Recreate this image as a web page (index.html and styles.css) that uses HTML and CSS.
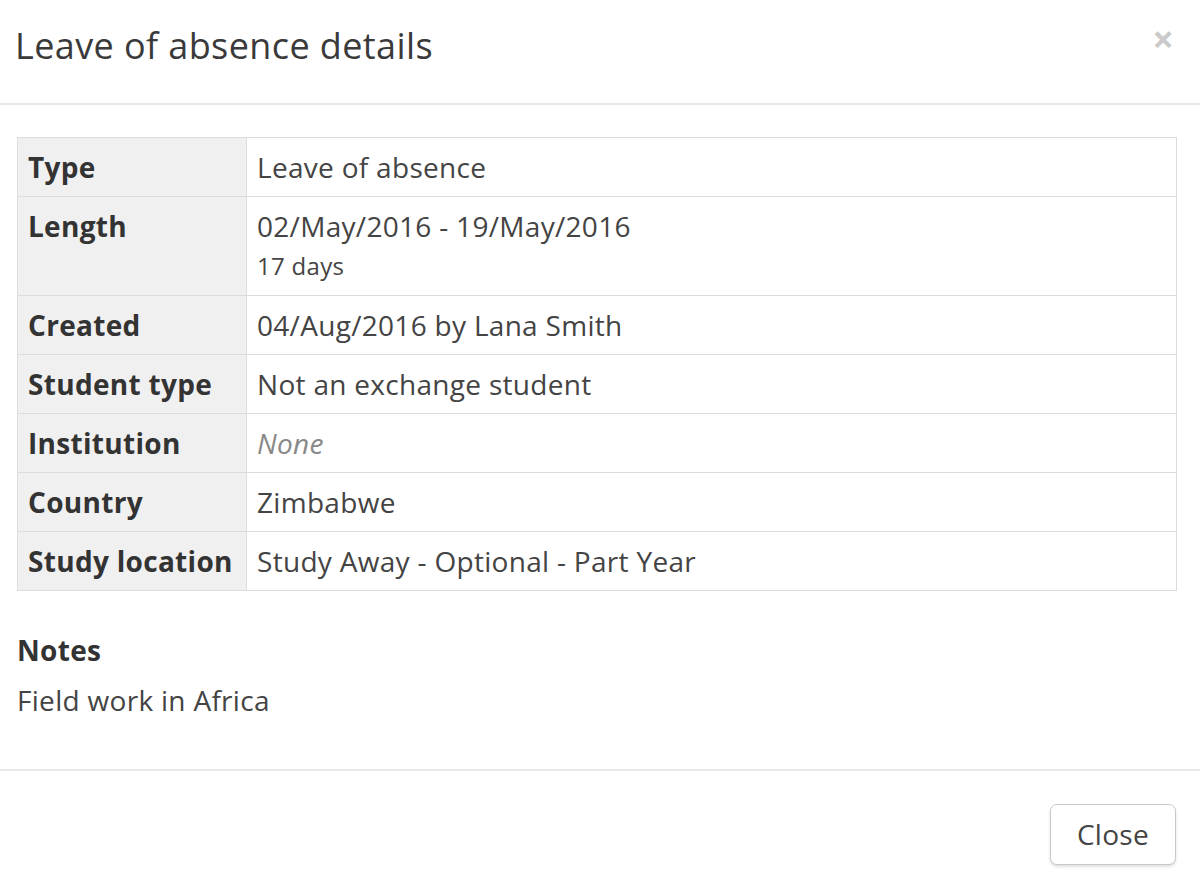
FILE: index.html
```html
<!DOCTYPE html>
<html>
<head>
<meta charset="utf-8">
<link rel="stylesheet" href="styles.css">
</head>
<body>
<div class="modal">
  <div class="modal-header">
    <h4 class="modal-title">Leave of absence details</h4>
    <button class="close" type="button">&times;</button>
  </div>
  <div class="modal-body">
    <table class="details">
      <tr><th>Type</th><td>Leave of absence</td></tr>
      <tr><th>Length</th><td>02/May/2016 - 19/May/2016<small>17 days</small></td></tr>
      <tr><th>Created</th><td>04/Aug/2016 by Lana Smith</td></tr>
      <tr><th>Student type</th><td>Not an exchange student</td></tr>
      <tr><th>Institution</th><td><em class="muted">None</em></td></tr>
      <tr><th>Country</th><td>Zimbabwe</td></tr>
      <tr><th>Study location</th><td>Study Away - Optional - Part Year</td></tr>
    </table>
    <h5 class="notes-title">Notes</h5>
    <p class="notes">Field work in Africa</p>
  </div>
  <div class="modal-footer">
    <button class="btn" type="button">Close</button>
  </div>
</div>
</body>
</html>
```
FILE: styles.css
```css
html, body {
  margin: 0;
  padding: 0;
  background: #fff;
}
body {
  font-family: "Open Sans", "Liberation Sans", sans-serif;
  font-size: 28px;
  line-height: 40px;
  letter-spacing: 0.3px;
  color: #333;
}
.modal {
  width: 1200px;
}
.modal-header {
  display: flex;
  justify-content: space-between;
  align-items: flex-start;
  padding: 26px 26px 37px 15px;
  border-bottom: 2px solid #e8e8e8;
}
.modal-title {
  margin: 0;
  font-size: 36px;
  font-weight: 400;
  line-height: 40px;
  letter-spacing: 0.4px;
  color: #3a3a3a;
}
.close {
  border: 0;
  background: none;
  padding: 0;
  margin: 0;
  font-family: "Open Sans", sans-serif;
  font-size: 38px;
  font-weight: 700;
  line-height: 24px;
  color: #cacaca;
  cursor: pointer;
}
.modal-body {
  padding: 32px 23px 49px 17px;
}
.details {
  width: 100%;
  border-collapse: collapse;
  border: 1px solid #dcdcdc;
  margin-bottom: 39px;
}
.details th,
.details td {
  border: 1px solid #dcdcdc;
  padding: 9px 10px;
  text-align: left;
  vertical-align: top;
  line-height: 40px;
}
.details th {
  width: 208px;
  white-space: nowrap;
  background: #f0f0f0;
  font-weight: 700;
  color: #333;
}
.details td {
  color: #444;
}
.details small {
  display: block;
  font-size: 24px;
  line-height: 40px;
}
.muted {
  color: #888;
}
.notes-title {
  margin: 0 0 10px;
  font-size: 28px;
  font-weight: 700;
  line-height: 40px;
}
.notes {
  margin: 0;
  color: #444;
}
.modal-footer {
  display: flex;
  justify-content: flex-end;
  padding: 33px 24px 24px;
  border-top: 2px solid #e8e8e8;
}
.btn {
  font-family: "Open Sans", sans-serif;
  font-size: 28px;
  line-height: 40px;
  letter-spacing: 0.3px;
  color: #444;
  background: #fff;
  border: 1px solid #c8c8c8;
  border-radius: 7px;
  padding: 9px 26px 10px;
  box-shadow: 0 2px 3px rgba(0,0,0,0.12);
  cursor: pointer;
}
```
